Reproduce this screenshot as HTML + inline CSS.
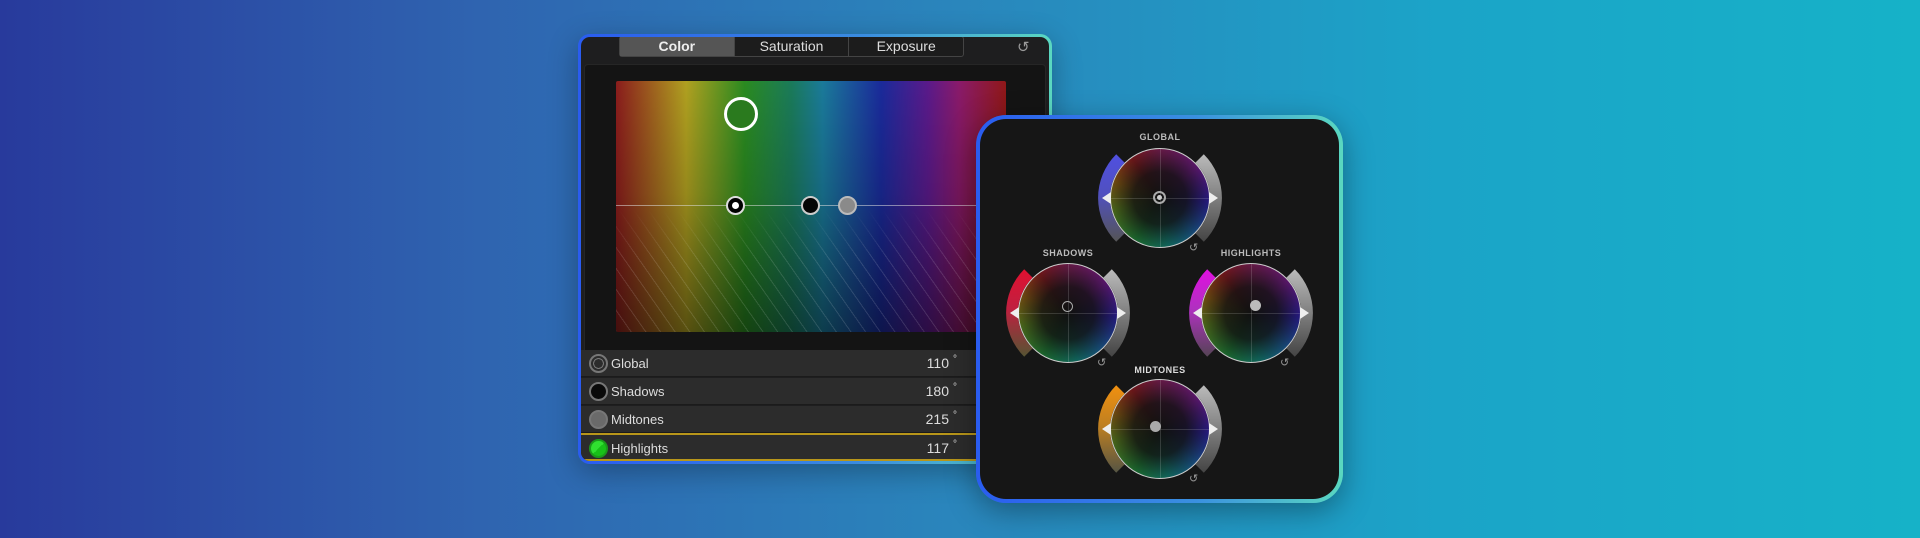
<!DOCTYPE html>
<html><head><meta charset="utf-8"><style>
*{margin:0;padding:0;box-sizing:border-box}
body{width:1920px;height:538px;overflow:hidden;position:relative;font-family:"Liberation Sans",sans-serif;
background:linear-gradient(90deg,#283a9c 0%,#2f64b0 25%,#2a86bc 50%,#1ba4c8 75%,#16b2c8 100%);}
.lp{position:absolute;left:578px;top:34px;width:474px;height:430px;border-radius:12px;padding:3px;
background:linear-gradient(90deg,#2a5cf0,#3a8ce0 60%,#5ad8c0);box-shadow:0 8px 30px rgba(0,0,0,.3)}
.lpi{position:relative;width:100%;height:100%;border-radius:9px;background:#1e1e1f;overflow:hidden}
.tabs{position:absolute;left:38px;top:-1px;width:345px;height:21px;border:1px solid #444;border-radius:3px;display:flex;background:#1c1c1c}
.tabs div{flex:1;color:#ddd;font-size:14px;text-align:center;line-height:19px;border-right:1px solid #444}
.tabs div:first-child{background:#555;color:#eee;font-weight:bold}
.tabs div:last-child{border:none}
.inner{position:absolute;left:3px;top:27px;width:462px;height:290px;background:#141414;border:1px solid #262626;border-radius:4px}
.spec{position:absolute;left:35px;top:44px;width:390px;height:251px;border-radius:2px;overflow:hidden;
background:linear-gradient(180deg,rgba(0,0,0,0) 0%,rgba(0,0,0,.15) 45%,rgba(0,0,0,.5) 100%),
linear-gradient(90deg,#8a1c1c 0%,#b0a020 18%,#2a8a20 33%,#1a7a5a 45%,#1a7a9a 53%,#1a2a9a 68%,#5a1a8a 80%,#8a1a6a 88%,#901818 100%)}
.hatch{position:absolute;left:0;top:128px;width:100%;height:123px;
background:repeating-linear-gradient(55deg,rgba(255,255,255,.13) 0 1px,transparent 1px 12px);
-webkit-mask:linear-gradient(180deg,transparent,#000 40%);}
.row{position:absolute;left:0;width:100%;height:27px;background:#2c2c2c;border-bottom:1px solid #1b1b1b;color:#ddd;font-size:13px}
.row span.t{position:absolute;left:30px;top:6px}
.row span.v{position:absolute;right:100px;top:5px;font-size:14px}
.row span.d{position:absolute;right:92px;top:4px;font-size:10px}
.ic{position:absolute;left:8px;top:4px;width:19px;height:19px;border-radius:50%;border:2px solid #777}
.rp{position:absolute;left:976px;top:115px;width:367px;height:388px;border-radius:30px;padding:4px;
background:linear-gradient(90deg,#2a5cf0,#3a90e0 60%,#5ad8c0);box-shadow:0 8px 30px rgba(0,0,0,.35)}
.rpi{position:relative;width:100%;height:100%;border-radius:26px;background:#161616;overflow:hidden}
.lab{position:absolute;color:#bbb;font-size:9px;letter-spacing:.5px;font-weight:bold;transform:translateX(-50%)}
.wh{position:absolute;width:100px;height:100px;border-radius:50%;
background:radial-gradient(circle,#111 0%,rgba(17,17,17,.88) 38%,rgba(17,17,17,.35) 75%,rgba(17,17,17,0) 100%),
conic-gradient(from 0deg,#a0206a 0deg,#8a1aa8 50deg,#3020c8 95deg,#1a70c0 135deg,#10a090 170deg,#20a040 210deg,#70a020 255deg,#b07010 290deg,#b01a20 325deg,#a0206a 360deg);
border:1.5px solid #ccc}
.wh:before{content:"";position:absolute;left:50%;top:0;width:1px;height:100%;background:rgba(255,255,255,.15)}
.wh:after{content:"";position:absolute;top:50%;left:0;height:1px;width:100%;background:rgba(255,255,255,.15)}
</style></head><body>
<div class="lp"><div class="lpi">
 <div class="tabs"><div>Color</div><div>Saturation</div><div>Exposure</div></div>
 <div style="position:absolute;left:436px;top:1px;color:#999;font-size:15px">↺</div>
 <div class="inner"></div>
 <div class="spec"><div class="hatch"></div>
  <div style="position:absolute;left:0;top:124px;width:100%;height:1px;background:rgba(220,220,220,.55)"></div>
  <div style="position:absolute;left:108px;top:16px;width:34px;height:34px;border-radius:50%;border:3px solid #fff;background:#2a7a1e"></div>
  <div style="position:absolute;left:110px;top:115px;width:19px;height:19px;border-radius:50%;border:2px solid #ddd;background:#000"><div style="position:absolute;left:4px;top:4px;width:7px;height:7px;border-radius:50%;background:#fff"></div></div>
  <div style="position:absolute;left:185px;top:115px;width:19px;height:19px;border-radius:50%;border:2px solid #ccc;background:#050505"></div>
  <div style="position:absolute;left:222px;top:115px;width:19px;height:19px;border-radius:50%;border:2px solid #bbb;background:#8a8a8a"></div>
 </div>
 <div class="row" style="top:313px"><div class="ic" style="background:radial-gradient(circle,#2c2c2c 40%,#777 42%,#777 50%,#2c2c2c 52%)"></div><span class="t">Global</span><span class="v">110</span><span class="d">°</span></div>
 <div class="row" style="top:341px"><div class="ic" style="background:#0a0a0a"></div><span class="t">Shadows</span><span class="v">180</span><span class="d">°</span></div>
 <div class="row" style="top:369px"><div class="ic" style="background:#6a6a6a"></div><span class="t">Midtones</span><span class="v">215</span><span class="d">°</span></div>
 <div class="row" style="top:396px;border-top:2px solid #b8961a;border-bottom:2px solid #b8961a;height:28px"><div class="ic" style="background:linear-gradient(135deg,#30e030 50%,#18c018 50%);border-color:#1a9a1a"></div><span class="t">Highlights</span><span class="v">117</span><span class="d">°</span></div>
</div></div>

<div class="rp"><div class="rpi">
 <div class="lab" style="left:180px;top:13px">GLOBAL</div>
 <div class="lab" style="left:88px;top:129px">SHADOWS</div>
 <div class="lab" style="left:271px;top:129px">HIGHLIGHTS</div>
 <div class="lab" style="left:180px;top:246px;color:#ddd">MIDTONES</div>
 <div class="wh" style="left:130px;top:29px"></div>
 <div class="wh" style="left:38px;top:144px"></div>
 <div class="wh" style="left:221px;top:144px"></div>
 <div class="wh" style="left:130px;top:260px"></div>
 <svg width="359" height="380" style="position:absolute;left:0;top:0">
  <defs>
   <linearGradient id="g" x1="0" y1="0" x2="0" y2="1"><stop offset="0" stop-color="#bbb"/><stop offset="1" stop-color="#444"/></linearGradient>
   <linearGradient id="b" x1="0" y1="0" x2="0" y2="1"><stop offset="0" stop-color="#5050e0"/><stop offset=".45" stop-color="#5050c0"/><stop offset="1" stop-color="#555"/></linearGradient>
   <linearGradient id="r" x1="0" y1="0" x2="0" y2="1"><stop offset="0" stop-color="#e01030"/><stop offset=".45" stop-color="#c02040"/><stop offset="1" stop-color="#553"/></linearGradient>
   <linearGradient id="m" x1="0" y1="0" x2="0" y2="1"><stop offset="0" stop-color="#e010e0"/><stop offset=".45" stop-color="#b030c0"/><stop offset="1" stop-color="#545"/></linearGradient>
   <linearGradient id="o" x1="0" y1="0" x2="0" y2="1"><stop offset="0" stop-color="#f09010"/><stop offset=".45" stop-color="#c08020"/><stop offset="1" stop-color="#554"/></linearGradient>
   <g id="rs"><path d="M43.8,-43.8 A62,62 0 0 1 43.8,43.8 L35.4,35.4 A50,50 0 0 0 35.4,-35.4Z" fill="url(#g)"/><path d="M49,-6 L58,0 L49,6Z" fill="#eee"/></g>
   <path id="lt" d="M-49,-6 L-58,0 L-49,6Z" fill="#eee"/>
  </defs>
  <g transform="translate(180,79)">
   <path d="M-43.8,-43.8 A62,62 0 0 0 -43.8,43.8 L-35.4,35.4 A50,50 0 0 1 -35.4,-35.4Z" fill="url(#b)"/><use href="#lt"/><use href="#rs"/>
  </g>
  <g transform="translate(88,194)">
   <path d="M-43.8,-43.8 A62,62 0 0 0 -43.8,43.8 L-35.4,35.4 A50,50 0 0 1 -35.4,-35.4Z" fill="url(#r)"/><use href="#lt"/><use href="#rs"/>
  </g>
  <g transform="translate(271,194)">
   <path d="M-43.8,-43.8 A62,62 0 0 0 -43.8,43.8 L-35.4,35.4 A50,50 0 0 1 -35.4,-35.4Z" fill="url(#m)"/><use href="#lt"/><use href="#rs"/>
  </g>
  <g transform="translate(180,310)">
   <path d="M-43.8,-43.8 A62,62 0 0 0 -43.8,43.8 L-35.4,35.4 A50,50 0 0 1 -35.4,-35.4Z" fill="url(#o)"/><use href="#lt"/><use href="#rs"/>
  </g>
 </svg>
 <div style="position:absolute;left:173px;top:72px;width:13px;height:13px;border-radius:50%;border:2px solid #aaa"><div style="position:absolute;left:2px;top:2px;width:5px;height:5px;border-radius:50%;background:#ccc"></div></div>
 <div style="position:absolute;left:82px;top:182px;width:11px;height:11px;border-radius:50%;border:1.5px solid #aaa"></div>
 <div style="position:absolute;left:270px;top:181px;width:11px;height:11px;border-radius:50%;background:#bbb"></div>
 <div style="position:absolute;left:170px;top:302px;width:11px;height:11px;border-radius:50%;background:#aaa"></div>
 <div style="position:absolute;left:209px;top:122px;color:#999;font-size:11px">↺</div>
 <div style="position:absolute;left:117px;top:237px;color:#999;font-size:11px">↺</div>
 <div style="position:absolute;left:300px;top:237px;color:#999;font-size:11px">↺</div>
 <div style="position:absolute;left:209px;top:353px;color:#999;font-size:11px">↺</div>
</div></div>
</body></html>
